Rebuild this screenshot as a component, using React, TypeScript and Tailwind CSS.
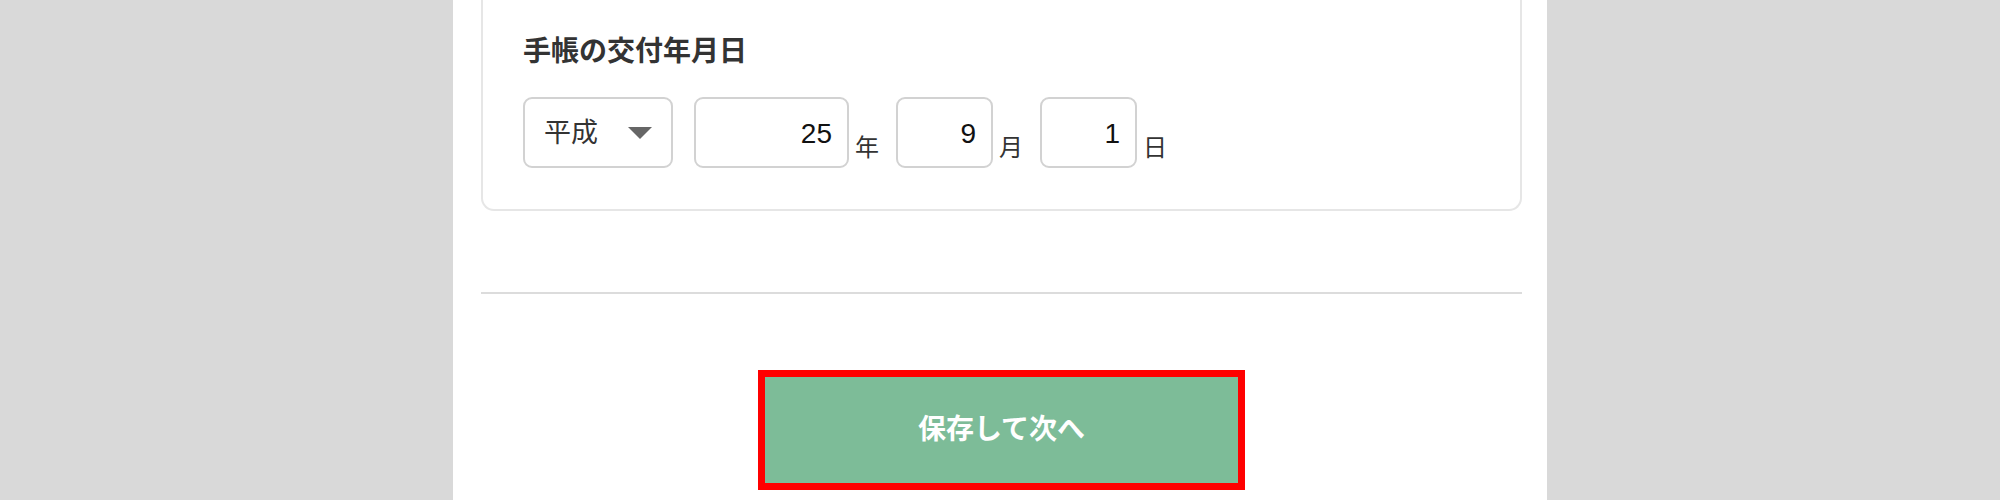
import React from 'react'

const font = { fontFamily: '"Liberation Sans", "Noto Sans CJK JP", sans-serif' }

const DateField = ({ value, w }: { value: string; w: string }) => (
  <div
    className={`${w} h-[71px] rounded-[9px] border-2 border-[#d2d2d2] bg-white flex items-center justify-end pr-[15px] pt-[2px] text-[28px] text-[#111]`}
  >
    {value}
  </div>
)

const Unit = ({ label, last }: { label: string; last?: boolean }) => (
  <span className={`ml-[6px] ${last ? '' : 'mr-[17px]'} mb-[6px] text-[24px] leading-[28px] text-[#333]`}>
    {label}
  </span>
)

export default function App() {
  return (
    <div className="w-full h-[500px] overflow-hidden bg-[#d9d9d9] flex justify-center" style={font}>
      <div className="w-[1094px] h-full bg-white pl-[28px] pr-[25px]">
        {/* 交付年月日 card (top is scrolled out of view) */}
        <div className="border-2 border-t-0 border-[#e6e6e6] rounded-b-[13px] px-[40px] pt-[36px] pb-[41px]">
          <h3 className="text-[28px] leading-[32px] font-bold text-[#333]">手帳の交付年月日</h3>
          <div className="mt-[29px] flex items-end">
            <div className="w-[150px] h-[71px] rounded-[9px] border-2 border-[#d2d2d2] bg-white flex items-center pl-[19px] pt-[2px] mr-[21px]">
              <span className="text-[27px] text-[#333]">平成</span>
              <svg className="ml-[30px] mb-[2px]" width="24" height="12" viewBox="0 0 24 12">
                <polygon points="0,0 24,0 12,12" fill="#666" />
              </svg>
            </div>
            <DateField value="25" w="w-[155px]" />
            <Unit label="年" />
            <DateField value="9" w="w-[97px]" />
            <Unit label="月" />
            <DateField value="1" w="w-[97px]" />
            <Unit label="日" last />
          </div>
        </div>

        <div className="mt-[81px] h-[2px] bg-[#dcdcdc]" />

        <div className="mt-[76px] flex justify-center">
          <button className="w-[487px] h-[120px] border-[7px] border-[#ff0000] bg-[#7dbc98] text-white text-[28px] font-bold">
            保存して次へ
          </button>
        </div>
      </div>
    </div>
  )
}
